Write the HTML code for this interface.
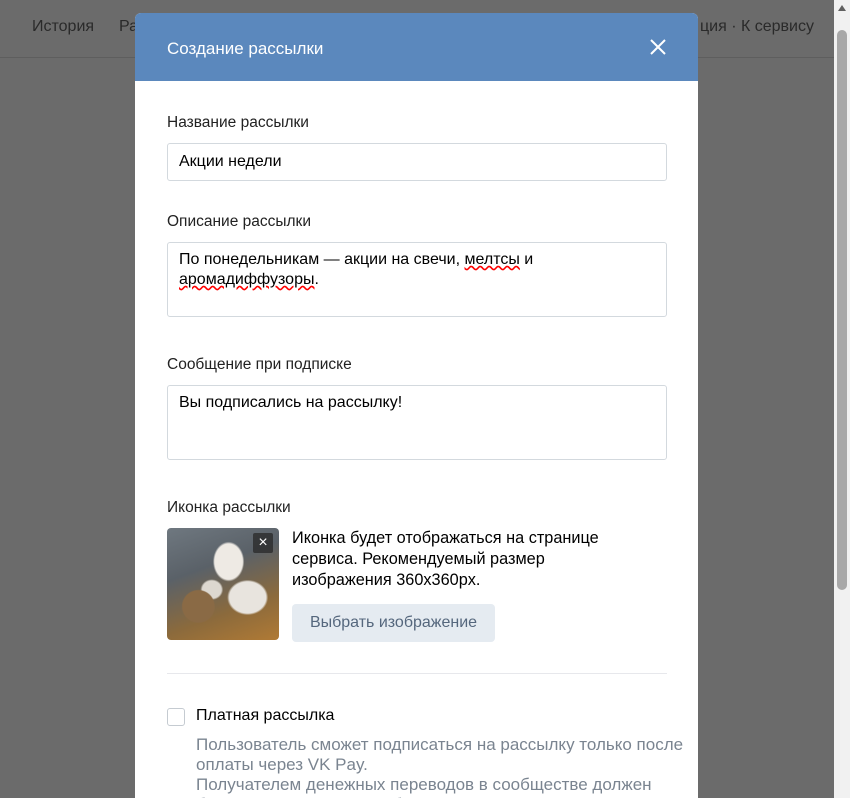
<!DOCTYPE html>
<html><head><meta charset="utf-8"><style>
*{box-sizing:border-box;margin:0;padding:0}
html,body{width:850px;height:798px;overflow:hidden}
body{background:#6b6b6b;font-family:"Liberation Sans",sans-serif;position:relative}
.top{position:absolute;left:0;top:0;width:834px;height:58px;border-bottom:1px solid #5e5e5e;font-size:16px;color:#2a2a2a}
.top span{position:absolute;top:18px}
.sb{position:absolute;right:0;top:0;width:16px;height:798px;background:#f1f1f1}
.sb .th{position:absolute;left:3px;top:30px;width:10px;height:560px;background:#a8a8a8;border-radius:5px}
.sb .ar{position:absolute;left:4px;top:5px;width:0;height:0;border-left:4px solid transparent;border-right:4px solid transparent;border-bottom:6px solid #606060}
.modal{position:absolute;left:135px;top:13px;width:563px;height:785px;background:#fff;border-radius:6px 6px 0 0;overflow:hidden}
.hd{height:68px;background:#5b88bd;color:#fff;font-size:17px;padding:26px 0 0 32px}
.x{position:absolute;right:32px;top:26px;width:16px;height:16px}
.lbl{position:absolute;left:32px;font-size:15.5px;color:#222}
.in{position:absolute;left:32px;width:500px;border:1px solid #d3d9de;border-radius:3px;font-size:16px;color:#000;padding:7px 11px;line-height:20px}
.img{position:absolute;left:32px;top:515px;width:112px;height:112px;border-radius:4px;overflow:hidden;background:radial-gradient(circle at 28% 70%,#8a6a45 0 14%,transparent 15%),radial-gradient(ellipse at 55% 30%,#eeeae4 0 16%,transparent 18%),radial-gradient(ellipse at 72% 62%,#e8e4de 0 16%,transparent 18%),radial-gradient(ellipse at 40% 55%,#ddd8d0 0 10%,transparent 12%),linear-gradient(160deg,#6f7880 0%,#5a6168 35%,#8b6a3c 70%,#b07a35 100%)}
.ic{position:absolute;right:6px;top:5px;width:20px;height:20px;background:rgba(40,40,40,.75);border-radius:2px;color:#fff;font-size:16px;line-height:20px;text-align:center}
.txt{position:absolute;left:157px;top:515px;font-size:16.3px;line-height:21px;color:#000}
.btn{position:absolute;left:157px;top:591px;width:203px;height:38px;background:#e5ebf1;border-radius:4px;color:#55677d;font-size:16px;text-align:center;line-height:38px}
.hr{position:absolute;left:32px;top:660px;width:500px;border-top:1px solid #e7e8ec}
.cb{position:absolute;left:32px;top:695px;width:18px;height:18px;border:1px solid #c5cbd1;border-radius:3px}
.pl{position:absolute;left:61px;top:694px;font-size:16px;color:#000}
.gr{position:absolute;left:61px;top:722px;font-size:17px;line-height:20px;color:#7a8490;width:520px}
</style></head><body>
<div class="top"><span style="left:32px">История</span><span style="left:119px">Ра</span><span style="left:700px">ция · К сервису</span></div>
<div class="sb"><div class="ar"></div><div class="th"></div></div>
<div class="modal">
<div class="hd">Создание рассылки</div>
<svg class="x" viewBox="0 0 16 16"><path d="M1 1L15 15M15 1L1 15" stroke="#fff" stroke-width="2"/></svg>
<div class="lbl" style="top:101px">Название рассылки</div>
<div class="in" style="top:130px;height:38px;padding-top:8px">Акции недели</div>
<div class="lbl" style="top:200px">Описание рассылки</div>
<div class="in" style="top:229px;height:75px">По понедельникам — акции на свечи, <u style="text-decoration:underline wavy red">мелтсы</u> и<br><u style="text-decoration:underline wavy red">аромадиффузоры</u>.</div>
<div class="lbl" style="top:343px">Сообщение при подписке</div>
<div class="in" style="top:372px;height:75px">Вы подписались на рассылку!</div>
<div class="lbl" style="top:486px">Иконка рассылки</div>
<div class="img"><div class="ic">×</div></div>
<div class="txt">Иконка будет отображаться на странице<br>сервиса. Рекомендуемый размер<br>изображения 360x360px.</div>
<div class="btn">Выбрать изображение</div>
<div class="hr"></div>
<div class="cb"></div>
<div class="pl">Платная рассылка</div>
<div class="gr">Пользователь сможет подписаться на рассылку только после<br>оплаты через VK Pay.<br>Получателем денежных переводов в сообществе должен<br>быть администратор сообщества с подключённым VK Pay.</div>
</div>
</body></html>
